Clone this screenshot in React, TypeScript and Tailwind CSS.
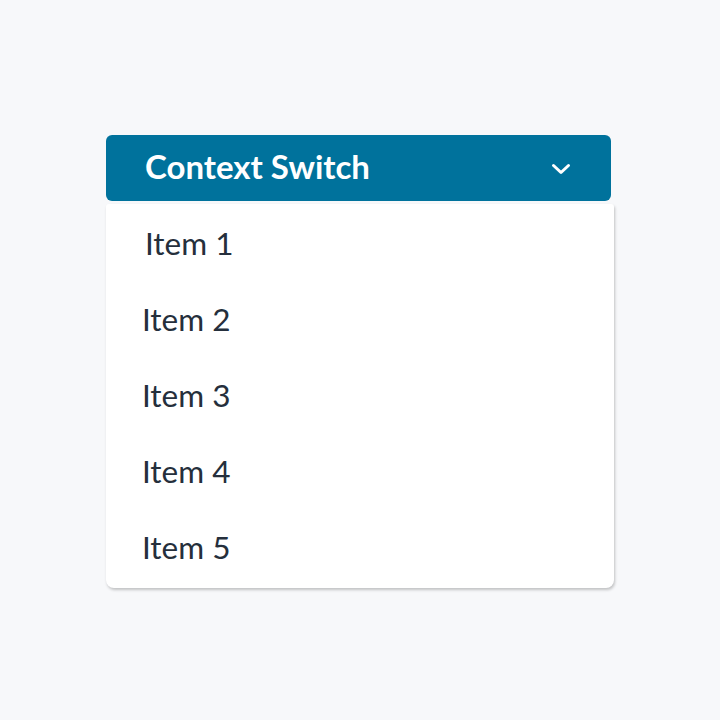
import React from "react";

export default function App() {
  const items = ["Item 1", "Item 2", "Item 3", "Item 4", "Item 5"];
  return (
    <div className="min-h-[720px] w-[720px] bg-[#f7f8fa] pt-[135px] pl-[106px]" style={{ fontFamily: "Lato, 'Noto Sans', sans-serif" }}>
      <div className="w-[508px]">
        <button className="flex h-[66px] w-[505px] items-center justify-between rounded-[6px] bg-[#00729c] pb-[3px] pl-[39px] pr-[40px] text-white">
          <span className="text-[33px] font-bold leading-none">Context Switch</span>
          <svg width="20" height="12" viewBox="0 0 20 12" fill="none" className="mt-[4px]">
            <path d="M2.5 2.5l7.5 7 7.5-7" stroke="white" strokeWidth="3" strokeLinecap="round" strokeLinejoin="round" />
          </svg>
        </button>
        <div className="mt-[3px] rounded-b-[8px] rounded-t-[3px] bg-white pt-[2px] pb-[2px] shadow-[1px_2px_3px_rgba(0,0,0,0.22)]">
          {items.map((it, i) => (
            <div key={it} className={`flex h-[76px] items-center text-[31.5px] leading-none text-[#252f3c] ${i === 0 ? "pl-[39px]" : "pl-[36px]"}`}>
              {it}
            </div>
          ))}
        </div>
      </div>
    </div>
  );
}
